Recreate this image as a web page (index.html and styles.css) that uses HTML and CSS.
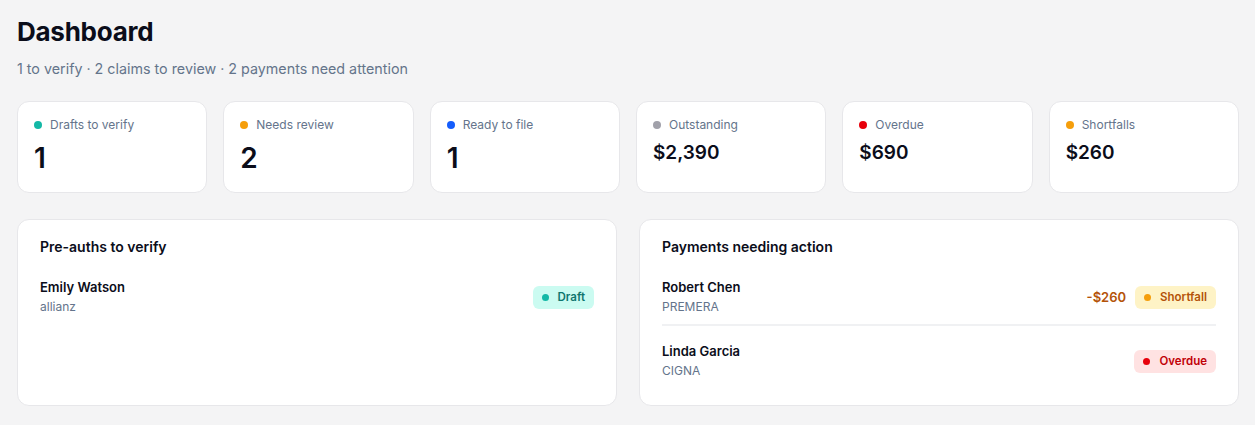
FILE: index.html
```html
<!DOCTYPE HTML>
<html lang="en">
<head>
    <meta name="viewport" content="width=device-width, initial-scale=1">
    <title>Dashboard</title>
    <link rel="stylesheet" href="styles.css">
</head>
<body>
    <div class="page">
        <h1 class="title">Dashboard</h1>
        <p class="subtitle">1 to verify · 2 claims to review · 2 payments need attention</p>

        <div class="stats">
            <div class="stat">
                <div class="stat-label"><span class="dot teal"></span>Drafts to verify</div>
                <div class="stat-value">1</div>
            </div>
            <div class="stat">
                <div class="stat-label"><span class="dot orange"></span>Needs review</div>
                <div class="stat-value">2</div>
            </div>
            <div class="stat">
                <div class="stat-label"><span class="dot blue"></span>Ready to file</div>
                <div class="stat-value">1</div>
            </div>
            <div class="stat">
                <div class="stat-label"><span class="dot gray"></span>Outstanding</div>
                <div class="stat-value money">$2,390</div>
            </div>
            <div class="stat">
                <div class="stat-label"><span class="dot red"></span>Overdue</div>
                <div class="stat-value money">$690</div>
            </div>
            <div class="stat">
                <div class="stat-label"><span class="dot orange"></span>Shortfalls</div>
                <div class="stat-value money">$260</div>
            </div>
        </div>

        <div class="panels">
            <div class="panel">
                <h2 class="panel-title">Pre-auths to verify</h2>
                <div class="row">
                    <div class="who">
                        <div class="name">Emily Watson</div>
                        <div class="sub">allianz</div>
                    </div>
                    <div class="row-end">
                        <span class="badge badge-draft"><span class="dot teal"></span>Draft</span>
                    </div>
                </div>
            </div>

            <div class="panel">
                <h2 class="panel-title">Payments needing action</h2>
                <div class="row divided">
                    <div class="who">
                        <div class="name">Robert Chen</div>
                        <div class="sub">PREMERA</div>
                    </div>
                    <div class="row-end">
                        <span class="amount">-$260</span>
                        <span class="badge badge-short"><span class="dot orange"></span>Shortfall</span>
                    </div>
                </div>
                <div class="row">
                    <div class="who">
                        <div class="name">Linda Garcia</div>
                        <div class="sub">CIGNA</div>
                    </div>
                    <div class="row-end">
                        <span class="badge badge-overdue"><span class="dot red"></span>Overdue</span>
                    </div>
                </div>
            </div>
        </div>
    </div>
</body>
</html>
```

FILE: styles.css
```css
body {
    margin: 0;
    background: #f4f4f5;
    font-family: Inter, "Liberation Sans", sans-serif;
    color: #0b0d1a;
}
.page {
    padding: 16px 16px 0 17px;
}
.title {
    margin: 0;
    font-size: 26px;
    line-height: 32px;
    font-weight: 700;
    letter-spacing: -0.01em;
}
.subtitle {
    margin: 11px 0 0;
    font-size: 14.3px;
    line-height: 20px;
    color: #64748b;
}
.stats {
    display: grid;
    grid-template-columns: repeat(6, 1fr);
    gap: 16px;
    margin-top: 22px;
}
.stat {
    background: white;
    border: 1px solid #e7e7ea;
    border-radius: 12px;
    height: 92px;
    box-sizing: border-box;
    padding: 15px 16px;
}
.stat-label {
    display: flex;
    align-items: center;
    gap: 8px;
    font-size: 12px;
    line-height: 16px;
    color: #64748b;
}
.stat-value {
    margin-top: 9px;
    font-size: 28px;
    line-height: 32px;
    font-weight: 600;
}
.stat-value.money {
    margin-top: 6px;
    font-size: 19px;
    line-height: 28px;
}
.dot {
    width: 8px;
    height: 8px;
    border-radius: 50%;
    flex-shrink: 0;
    display: inline-block;
}
.teal { background: #14b8a6; }
.orange { background: #f59e0b; }
.blue { background: #155dfc; }
.gray { background: #a1a1aa; }
.red { background: #e7000b; }
.panels {
    display: grid;
    grid-template-columns: 1fr 1fr;
    gap: 22px;
    margin-top: 26px;
}
.panel {
    background: white;
    border: 1px solid #e7e7ea;
    border-radius: 12px;
    padding: 19px 22px 17px;
    min-height: 187px;
    box-sizing: border-box;
}
.panel-title {
    margin: 0 0 15px;
    font-size: 14px;
    line-height: 16px;
    font-weight: 600;
}
.row {
    display: flex;
    justify-content: space-between;
    align-items: center;
    padding: 8px 0;
}
.row.divided {
    border-bottom: 2px solid #f0f1f3;
    margin-bottom: 8px;
}
.name {
    font-size: 13px;
    line-height: 18px;
    font-weight: 600;
}
.sub {
    margin-top: 2px;
    font-size: 12px;
    line-height: 18px;
    color: #64748b;
}
.row-end {
    display: flex;
    align-items: center;
    gap: 9px;
}
.amount {
    font-size: 13px;
    font-weight: 600;
    color: #b45309;
}
.badge {
    display: inline-flex;
    align-items: center;
    gap: 9px;
    height: 23px;
    padding: 0 9px;
    border-radius: 6px;
    font-size: 11.5px;
    font-weight: 600;
}
.badge .dot {
    width: 7px;
    height: 7px;
}
.badge-draft {
    background: #cbfbf1;
    color: #0f766e;
}
.badge-short {
    background: #fef3c6;
    color: #b45309;
}
.badge-overdue {
    background: #ffe2e2;
    color: #c10007;
}
```
